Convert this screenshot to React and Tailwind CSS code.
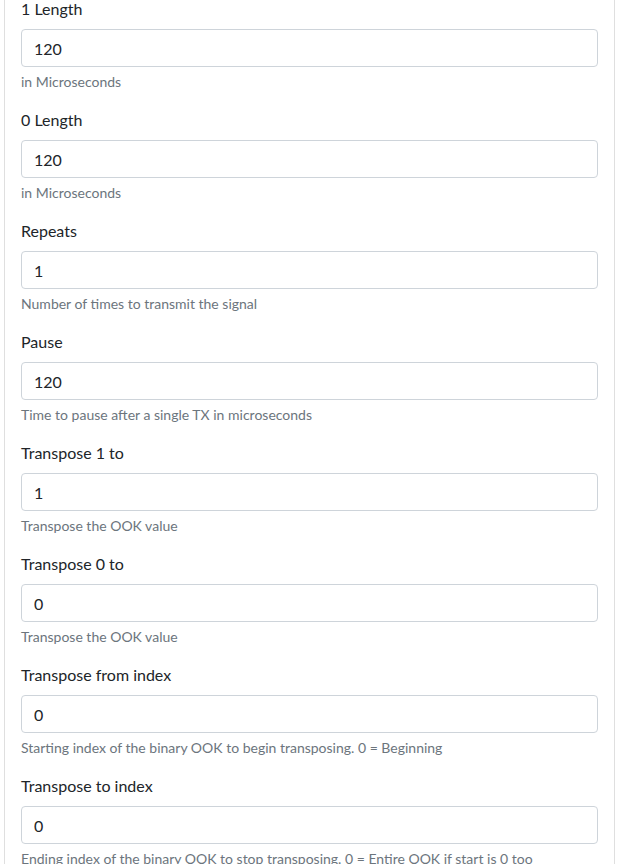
const FIELDS = [
  { label: '1 Length', value: '120', help: 'in Microseconds' },
  { label: '0 Length', value: '120', help: 'in Microseconds' },
  { label: 'Repeats', value: '1', help: 'Number of times to transmit the signal' },
  { label: 'Pause', value: '120', help: 'Time to pause after a single TX in microseconds' },
  { label: 'Transpose 1 to', value: '1', help: 'Transpose the OOK value' },
  { label: 'Transpose 0 to', value: '0', help: 'Transpose the OOK value' },
  { label: 'Transpose from index', value: '0', help: 'Starting index of the binary OOK to begin transposing. 0 = Beginning' },
  { label: 'Transpose to index', value: '0', help: 'Ending index of the binary OOK to stop transposing. 0 = Entire OOK if start is 0 too' },
]

export default function App() {
  return (
    <div className="h-[864px] overflow-hidden bg-white text-[#212529]" style={{ fontFamily: 'Lato, "Open Sans", sans-serif' }}>
      <div className="ml-[4px] w-[611px] border-x border-[#dfdfdf] px-4">
        <div className="-mt-[3px]">
          {FIELDS.map(f => (
            <div key={f.label} className="mb-4">
              <label className="block mb-2 text-base leading-6">{f.label}</label>
              <input readOnly value={f.value}
                className="block w-full h-[38px] px-3 text-base leading-6 border border-[#ced4da] rounded-[4px] outline-none text-[#212529]" />
              <div className="mt-1 text-sm leading-[21px] text-[#6c757d]">{f.help}</div>
            </div>
          ))}
        </div>
      </div>
    </div>
  )
}
